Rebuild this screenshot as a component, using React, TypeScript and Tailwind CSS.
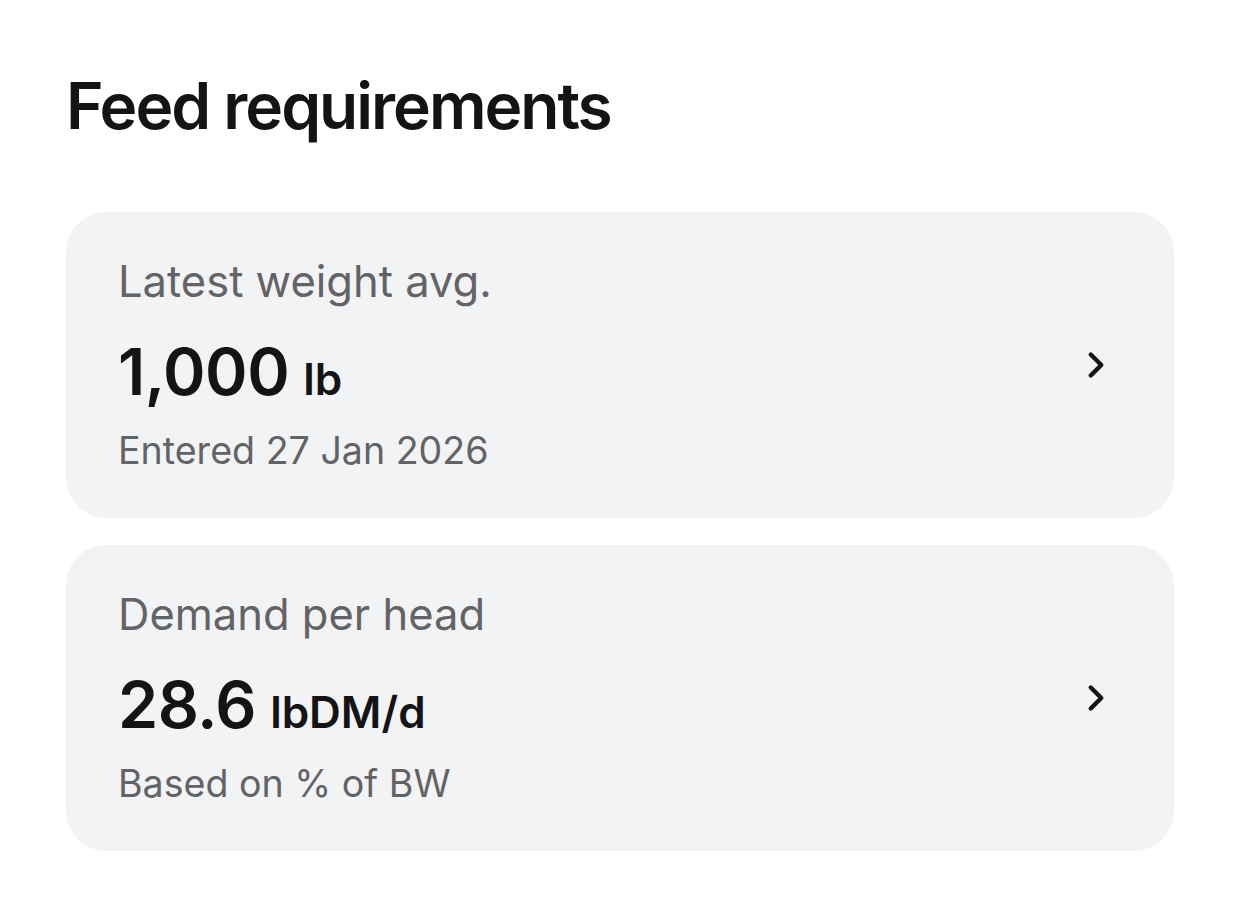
import { ChevronRight } from "lucide-react";

type Row = {
  label: string;
  value: string;
  unit: string;
  note: string;
};

const rows: Row[] = [
  { label: "Latest weight avg.", value: "1,000", unit: "lb", note: "Entered 27 Jan 2026" },
  { label: "Demand per head", value: "28.6", unit: "lbDM/d", note: "Based on % of BW" },
];

function StatCard({ row }: { row: Row }) {
  return (
    <button className="flex h-[306px] w-full items-center rounded-[40px] bg-[#f2f3f5] pl-[52px] pr-[57px] text-left">
      <div className="flex flex-1 flex-col">
        <div className="text-[43.5px] leading-[50px] text-[#636366]">{row.label}</div>
        <div className="mt-[30px] flex items-baseline gap-[14px] text-[#141416]">
          <span className="text-[64.5px] font-semibold leading-[72px] tracking-[-0.5px]">{row.value}</span>
          <span className="text-[44px] font-semibold leading-[50px]">{row.unit}</span>
        </div>
        <div className="mt-[20px] text-[37.6px] leading-[46px] text-[#636366]">{row.note}</div>
      </div>
      <ChevronRight className="h-[42px] w-[42px] text-[#141416]" strokeWidth={2.5} />
    </button>
  );
}

export default function App() {
  return (
    <div
      className="min-h-screen bg-white px-[66px] pt-[66px]"
      style={{ fontFamily: "Inter, 'Noto Sans', sans-serif" }}
    >
      <h1 className="text-[64px] font-semibold leading-[80px] tracking-[-2px] text-[#141416]">
        Feed requirements
      </h1>
      <div className="mt-[66px] flex w-[1108px] flex-col gap-[27px]">
        {rows.map((r) => (
          <StatCard key={r.label} row={r} />
        ))}
      </div>
    </div>
  );
}
